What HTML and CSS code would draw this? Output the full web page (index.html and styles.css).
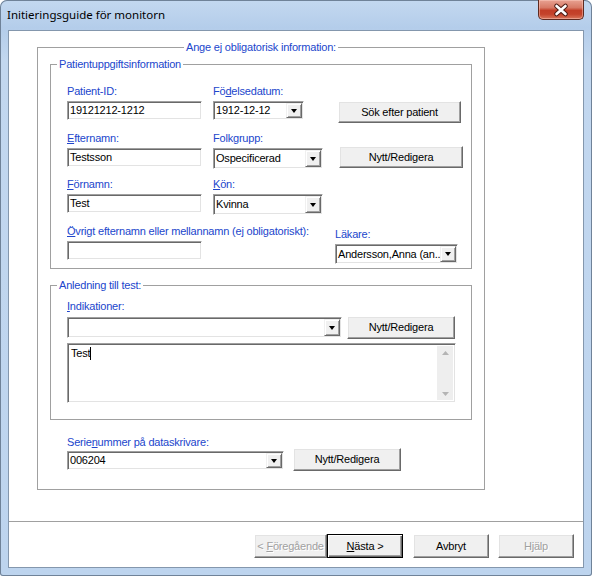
FILE: index.html
```html
<!DOCTYPE html>
<html lang="sv">
<head>
<meta charset="utf-8">
<title>Initieringsguide för monitorn</title>
<link rel="stylesheet" href="styles.css">
</head>
<body>
<div class="window">
  <div class="titlebar">
    <span class="title">Initieringsguide för monitorn</span>
    <div class="close">
      <svg width="44" height="18" viewBox="0 0 44 18">
        <path d="M17.5 5 L26.5 13 M26.5 5 L17.5 13" stroke="#4a1a12" stroke-width="4.6" stroke-linecap="round" fill="none"/>
        <path d="M17.5 5 L26.5 13 M26.5 5 L17.5 13" stroke="#ffffff" stroke-width="2.6" stroke-linecap="round" fill="none"/>
      </svg>
    </div>
  </div>
  <div class="client">
    <div class="group outer">
      <span class="caption center">Ange ej obligatorisk information:</span>

      <div class="group g1">
        <span class="caption">Patientuppgiftsinformation</span>
        <div class="row r1">
          <div class="field c1">
            <span class="lbl">Patient-ID:</span>
            <div class="edit w-text">19121212-1212</div>
          </div>
          <div class="field c2">
            <span class="lbl">Fö<u>d</u>elsedatum:</span>
            <div class="combo w-date"><span class="val">1912-12-12</span><span class="drop"></span></div>
          </div>
          <div class="field c3 sok-slot">
            <button class="btn b-sok">Sök efter patient</button>
          </div>
        </div>
        <div class="row r2">
          <div class="field c1">
            <span class="lbl"><u>E</u>fternamn:</span>
            <div class="edit w-text">Testsson</div>
          </div>
          <div class="field c2">
            <span class="lbl">Folkgrupp:</span>
            <div class="combo w-sel"><span class="val">Ospecificerad</span><span class="drop"></span></div>
          </div>
          <div class="field c3 nytt-slot">
            <button class="btn b-nytt">Nytt/Redigera</button>
          </div>
        </div>
        <div class="row r3">
          <div class="field c1">
            <span class="lbl"><u>F</u>örnamn:</span>
            <div class="edit w-text">Test</div>
          </div>
          <div class="field c2">
            <span class="lbl"><u>K</u>ön:</span>
            <div class="combo w-sel"><span class="val">Kvinna</span><span class="drop"></span></div>
          </div>
        </div>
        <div class="row r4">
          <div class="field c1">
            <span class="lbl"><u>Ö</u>vrigt efternamn eller mellannamn (ej obligatoriskt):</span>
            <div class="edit w-text"></div>
          </div>
          <div class="field c2"></div>
          <div class="field c3 lak-slot">
            <span class="lbl">Läkare:</span>
            <div class="combo w-lak"><span class="val">Andersson,Anna (an..</span><span class="drop"></span></div>
          </div>
        </div>
      </div>

      <div class="group g2">
        <span class="caption">Anledning till test:</span>
        <span class="lbl"><u>I</u>ndikationer:</span>
        <div class="ind-row">
          <div class="combo w-ind"><span class="val"></span><span class="drop"></span></div>
          <button class="btn b-ind">Nytt/Redigera</button>
        </div>
        <div class="memo">
          <div class="memo-text">Test<span class="caret"></span></div>
          <div class="vscroll">
            <svg width="7" height="4" viewBox="0 0 7 4"><polygon points="0,4 7,4 3.5,0" fill="#b4b4b4"/></svg>
            <svg width="7" height="4" viewBox="0 0 7 4"><polygon points="0,0 7,0 3.5,4" fill="#b4b4b4"/></svg>
          </div>
        </div>
      </div>

      <div class="serial">
        <span class="lbl">Serie<u>n</u>ummer på dataskrivare:</span>
        <div class="ser-row">
          <div class="combo w-ser"><span class="val">006204</span><span class="drop"></span></div>
          <button class="btn b-ser">Nytt/Redigera</button>
        </div>
      </div>
    </div>

    <div class="sep"></div>

    <div class="actions">
      <button class="btn act prev disabled">&lt; <u>F</u>öregående</button>
      <button class="btn act next default"><u>N</u>ästa &gt;</button>
      <button class="btn act cancel">Avbryt</button>
      <button class="btn act help disabled">Hjälp</button>
    </div>
  </div>
</div>
</body>
</html>
```

FILE: styles.css
```css
* { box-sizing: border-box; }

body {
  margin: 0;
  background: #ffffff;
  font-family: "Liberation Sans", Arial, sans-serif;
  font-size: 11px;
  letter-spacing: -0.2px;
  color: #000;
}

.window {
  width: 592px;
  height: 576px;
  padding: 0 8px 8px;
  display: flex;
  flex-direction: column;
  border-radius: 7px 7px 3px 3px;
  background: linear-gradient(to bottom, #c3d8f0 0px, #b4cdea 28px, #c2d7ef 60px, #bdd4ee 100%);
  box-shadow: inset 0 0 0 1px #6f8298;
}

.titlebar {
  height: 30px;
  display: flex;
  justify-content: space-between;
  align-items: flex-start;
}

.title {
  font-family: "Noto Sans", "Open Sans", sans-serif;
  font-size: 11.5px;
  letter-spacing: 0;
  line-height: 16px;
  margin: 7px 0 0 -1px;
  color: #000;
}

.close {
  width: 46px;
  height: 20px;
  border: 1px solid #5e2a20;
  border-top: none;
  border-radius: 0 0 5px 5px;
  background: linear-gradient(to bottom, #e8a292 0%, #d77a66 40%, #c23e27 55%, #c4432b 75%, #d9765b 100%);
  box-shadow: inset 0 0 0 1px rgba(255, 210, 200, 0.45);
  display: flex;
  align-items: center;
  justify-content: center;
}

.close svg { display: block; }

.client {
  width: 576px;
  height: 538px;
  background: #ffffff;
  border: 1px solid #8497ad;
  display: flex;
  flex-direction: column;
}

/* group boxes */
.group {
  position: relative;
  border: 1px solid #a0a0a0;
}

.caption {
  position: absolute;
  top: -7px;
  left: 6px;
  padding: 0 2px;
  background: #ffffff;
  color: #2146cc;
  line-height: 13px;
  white-space: nowrap;
}

.caption.center {
  left: 50%;
  transform: translateX(-50%);
}

.outer {
  margin: 16px 0 0 28px;
  width: 448px;
  height: 443px;
}

.g1 {
  margin: 16px 0 0 12px;
  width: 422px;
  height: 205px;
  padding: 20px 0 0 16px;
}

.lbl {
  display: block;
  height: 13px;
  line-height: 13px;
  color: #2146cc;
  white-space: nowrap;
}

.lbl u { text-decoration-thickness: 1px; text-underline-offset: 1px; }

.field .lbl { margin-bottom: 3px; }

.row {
  display: flex;
  height: 35px;
}

.r2 { margin-top: 12px; }
.r3 { margin-top: 11px; }
.r4 { margin-top: 12px; }

.c1 { width: 146px; flex: none; }
.c2 { width: 122px; flex: none; }
.c3 { flex: none; }

.sok-slot { padding-top: 16px; margin-left: 3px; }
.nytt-slot { padding-top: 14px; margin-left: 4px; }
.lak-slot { margin-top: 3px; }

/* sunken controls */
.edit, .combo, .memo {
  border: 1px solid;
  border-color: #a0a0a0 #ffffff #ffffff #a0a0a0;
  box-shadow: inset 1px 1px 0 #696969, inset -1px -1px 0 #e3e3e3;
  background: #ffffff;
}

.edit {
  height: 19px;
  padding: 1px 2px 0 2px;
  line-height: 15px;
  white-space: nowrap;
}

.w-text { width: 135px; }

.combo {
  display: flex;
  padding: 1px;
}

.combo .val {
  flex: 1;
  padding-left: 1px;
  line-height: 15px;
  white-space: nowrap;
  overflow: hidden;
}

.combo .drop {
  flex: none;
  width: 16px;
  height: 100%;
  background: #f0f0f0;
  border: 1px solid;
  border-color: #f0f0f0 #696969 #696969 #f0f0f0;
  box-shadow: inset 1px 1px 0 #ffffff, inset -1px -1px 0 #a0a0a0;
  display: flex;
  align-items: center;
  justify-content: center;
}

.combo .drop::after {
  content: "";
  width: 0;
  height: 0;
  border-left: 3.5px solid transparent;
  border-right: 3.5px solid transparent;
  border-top: 4px solid #000;
}

.w-date { width: 91px; height: 19px; }
.w-sel { width: 110px; height: 21px; }
.w-sel .val { line-height: 17px; }
.w-lak { width: 123px; height: 20px; }
.w-lak .val { line-height: 16px; }
.w-ind { width: 275px; height: 21px; margin-top: 1px; }
.w-ser { width: 217px; height: 19px; }

/* raised buttons */
.btn {
  font: inherit;
  font-weight: normal;
  letter-spacing: inherit;
  color: #000;
  background: #f0f0f0;
  border: 1px solid;
  border-color: #ffffff #696969 #696969 #ffffff;
  box-shadow: inset -1px -1px 0 #a0a0a0, inset 1px 1px 0 #e3e3e3;
  padding: 0;
  margin: 0;
  height: 22px;
  line-height: 13px;
  white-space: nowrap;
  display: block;
}

.b-sok { width: 123px; }
.b-nytt { width: 124px; }

/* group 2 */
.g2 {
  margin: 16px 0 0 12px;
  width: 422px;
  height: 135px;
  padding: 14px 0 0 16px;
}

.g2 > .lbl { margin-bottom: 3px; }

.ind-row {
  display: flex;
  align-items: flex-start;
}

.b-ind {
  width: 108px;
  height: 23px;
  margin-left: 5px;
}

.memo {
  margin-top: 4px;
  width: 389px;
  height: 60px;
  display: flex;
  padding: 2px;
}

.memo-text {
  flex: 1;
  padding: 1px 0 0 1px;
  line-height: 13px;
}

.caret {
  display: inline-block;
  width: 1px;
  height: 13px;
  background: #000;
  vertical-align: top;
}

.vscroll {
  width: 16px;
  flex: none;
  background: #eeeeee;
  display: flex;
  flex-direction: column;
  justify-content: space-between;
  align-items: center;
  padding: 5px 0 4px;
}

.vscroll svg { display: block; }

/* serial */
.serial {
  margin: 16px 0 0 29px;
}

.serial > .lbl { margin-bottom: 2px; }

.ser-row {
  display: flex;
  align-items: flex-start;
}

.b-ser {
  width: 108px;
  height: 23px;
  margin: -3px 0 0 9px;
}

/* footer */
.sep {
  margin-top: 31px;
  border-top: 1px solid #a0a0a0;
  height: 0;
}

.actions {
  margin-top: 12px;
  display: flex;
  justify-content: flex-end;
  padding-right: 9px;
}

.act {
  height: 24px;
  width: 76px;
}

.prev { width: 73px; }
.next { margin-left: 0; }
.cancel { margin-left: 10px; }
.help { margin-left: 9px; }

.default {
  border: 1px solid #000000;
  box-shadow: inset 1px 1px 0 #ffffff, inset -1px -1px 0 #696969, inset -2px -2px 0 #a0a0a0;
}

.disabled {
  color: #a0a0a0;
  text-shadow: 1px 1px 0 #ffffff;
}
```
